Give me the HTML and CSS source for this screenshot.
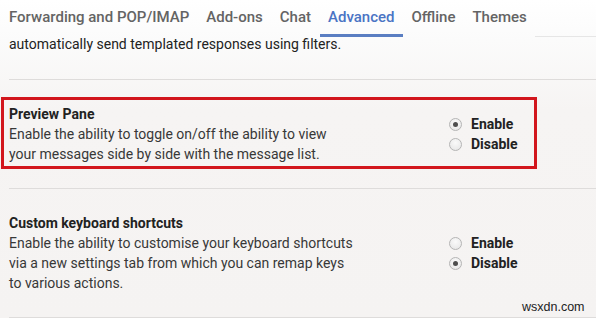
FILE: index.html
```html
<!DOCTYPE html>
<html>
<head>
<meta charset="utf-8">
<link rel="stylesheet" href="styles.css">
</head>
<body>
<div class="page">
  <nav class="tabs">
    <span class="tab">Forwarding and POP/IMAP</span>
    <span class="tab">Add-ons</span>
    <span class="tab">Chat</span>
    <span class="tab active">Advanced</span>
    <span class="tab">Offline</span>
    <span class="tab">Themes</span>
    <span class="tab-fill"></span>
  </nav>
  <div class="intro">automatically send templated responses using filters.</div>
  <section class="row highlighted">
    <div class="desc">
      <div class="title">Preview Pane</div>
      <div class="text">Enable the ability to toggle on/off the ability to view<br>your messages side by side with the message list.</div>
    </div>
    <div class="options">
      <label class="opt"><span class="radio checked"></span>Enable</label>
      <label class="opt"><span class="radio"></span>Disable</label>
    </div>
  </section>
  <section class="row">
    <div class="desc">
      <div class="title">Custom keyboard shortcuts</div>
      <div class="text">Enable the ability to customise your keyboard shortcuts<br>via a new settings tab from which you can remap keys<br>to various actions.</div>
    </div>
    <div class="options">
      <label class="opt"><span class="radio"></span>Enable</label>
      <label class="opt"><span class="radio checked"></span>Disable</label>
    </div>
  </section>
  <div class="watermark">wsxdn.com</div>
</div>
</body>
</html>
```

FILE: styles.css
```css
html, body {
  margin: 0;
  padding: 0;
}
body {
  width: 596px;
  height: 318px;
  overflow: hidden;
  background: #f6f4f3;
  font-family: Roboto, "Liberation Sans", Arial, sans-serif;
  color: #222;
}
.page {
  position: relative;
  height: 318px;
  background: linear-gradient(180deg, #ffffff 0px, #fbfbfb 40px, #f6f4f3 110px, #f5f3f2 318px);
}
.tabs {
  display: flex;
  height: 37px;
  padding-left: 1px;
}
.tab {
  box-sizing: border-box;
  height: 37px;
  line-height: 34px;
  padding: 0 8.5px;
  font-size: 15px;
  font-weight: 500;
  color: #646464;
  border-bottom: 3px solid transparent;
  white-space: nowrap;
}
.tab:first-child {
  padding-left: 8px;
}
.tab.active {
  color: #4a74c4;
  border-bottom-color: #5a7ec2;
}
.tab-fill {
  flex: 1;
  border-bottom: 1px solid #e6e6e6;
  height: 37px;
  box-sizing: border-box;
}
.intro {
  font-size: 14px;
  line-height: 14px;
  padding: 0 0 28px 0;
  margin-left: 9px;
  color: #222;
  border-bottom: 1px solid #dedcdb;
}
.row {
  display: flex;
  align-items: center;
  margin-left: 9px;
  padding: 24px 0 24px 0;
  border-bottom: 1px solid #dedcdb;
  position: relative;
}
.row.highlighted::before {
  content: "";
  position: absolute;
  left: -8px;
  top: 17px;
  width: 530px;
  height: 66px;
  border: 3px solid #d2161d;
  pointer-events: none;
}
.desc {
  width: 440px;
  flex: none;
}
.title {
  font-size: 14px;
  line-height: 20px;
  font-weight: 700;
  color: #222;
}
.text {
  font-size: 14px;
  line-height: 20px;
  color: #383838;
}
.options {
  display: flex;
  flex-direction: column;
}
.opt {
  display: flex;
  align-items: center;
  height: 20px;
  font-size: 14px;
  font-weight: 700;
  color: #222;
}
.radio {
  box-sizing: border-box;
  width: 13px;
  height: 13px;
  border-radius: 50%;
  border: 1px solid #b5b5b5;
  background: radial-gradient(circle at 50% 35%, #fafafa 0%, #e4e4e4 100%);
  margin-right: 9px;
  position: relative;
}
.radio.checked::after {
  content: "";
  position: absolute;
  left: 3px;
  top: 3px;
  width: 5px;
  height: 5px;
  border-radius: 50%;
  background: #4d4d4d;
}
.watermark {
  position: absolute;
  left: 522px;
  top: 299px;
  font-family: "Liberation Sans", Arial, sans-serif;
  font-size: 12.5px;
  line-height: 16px;
  color: #222;
}
```
